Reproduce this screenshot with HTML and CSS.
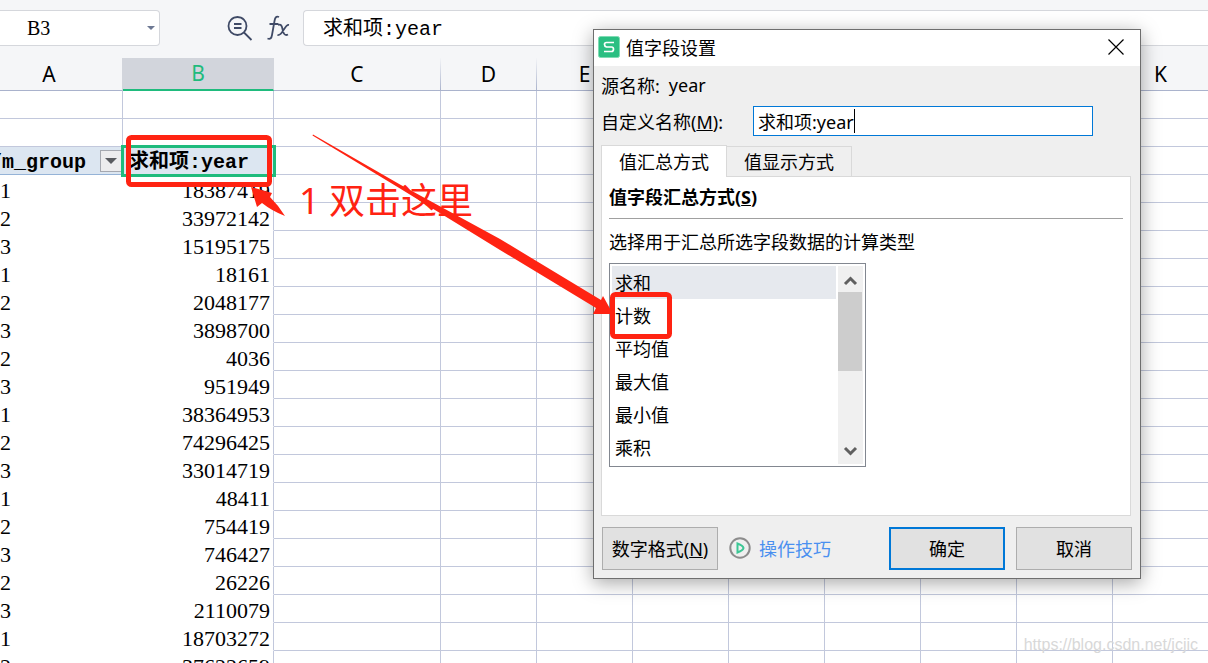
FILE: index.html
```
<!DOCTYPE html>
<html lang="zh-CN">
<head>
    <meta charset="UTF-8">
    <meta name="viewport" content="width=device-width, initial-scale=1.0">
    <title>值字段设置</title>
    <link rel="stylesheet" href="styles.css">
</head>
<body>
    <div class="toolbar">
        <div class="name-box">
            <input type="text" class="name-input" value="B3" aria-label="名称框">
            <button class="name-arrow" aria-label="展开"></button>
        </div>
        <div class="tools">
            <button class="tool" aria-label="查找">
                <svg width="26" height="26" viewBox="0 0 26 26" fill="none" stroke="#3f4a66" stroke-width="1.800">
                    <circle cx="10.500" cy="11" r="9"/>
                    <path d="M7 9h7.500M7 13h7.500M17 17.500L24.500 25"/>
                </svg>
            </button>
            <button class="tool" aria-label="插入函数">
                <svg width="24" height="26" viewBox="0 0 24 26" fill="none" stroke="#3f4a66" stroke-width="1.800">
                    <path d="M12 2C9 0.500 8 3 7.500 6L5 20C4.500 23 3.500 24.500 0.500 23.500M2.500 9h9M11 10c3-1.500 4 1 4.500 4s1.500 7.500 5.500 5.500M22 10c-4.500-1-6 11-11.500 10"/>
                </svg>
            </button>
        </div>
        <input type="text" class="formula" value="求和项:year" aria-label="编辑栏">
    </div>

    <table class="sheet">
        <colgroup>
            <col class="col-a"><col class="col-b"><col class="col-c">
            <col><col><col><col><col><col><col><col>
        </colgroup>
        <thead>
            <tr>
                <th class="head-a">A</th><th class="active">B</th><th>C</th><th>D</th><th>E</th><th>F</th><th>G</th><th>H</th><th>I</th><th>J</th><th>K</th>
            </tr>
        </thead>
        <tbody id="rows"></tbody>
    </table>

    <div class="dialog" role="dialog" aria-labelledby="title">
        <div class="titlebar">
            <svg class="logo" width="22" height="22" viewBox="0 0 22 22">
                <rect x="0.500" y="0.500" width="21" height="21" rx="2" fill="#2bbf82" stroke="#7fdcb4"/>
                <path d="M16 6.500H8.500Q6.500 6.500 6.500 8.500T8.500 11H13.500Q15.500 11 15.500 13.200T13.500 15.500H6" fill="none" stroke="#fff" stroke-width="1.700"/>
            </svg>
            <span id="title">值字段设置</span>
            <button class="close" aria-label="关闭">
                <svg width="16" height="16" viewBox="0 0 16 16" stroke="#000" stroke-width="1.200"><path d="M0.500 0.500l15 15M15.500 0.500l-15 15"/></svg>
            </button>
        </div>
        <div class="source"><span>源名称:</span><span>year</span></div>
        <div class="custom">
            <label for="custom">自定义名称(<u>M</u>):</label>
            <div class="text-field">
                <input type="text" id="custom" value="求和项:year">
                <span class="caret"></span>
            </div>
        </div>
        <div class="tabs" role="tablist">
            <button class="tab current" role="tab" aria-selected="true">值汇总方式</button>
            <button class="tab" role="tab" aria-selected="false">值显示方式</button>
        </div>
        <div class="panel" role="tabpanel">
            <h2>值字段汇总方式(<u>S</u>)</h2>
            <label class="hint" for="method">选择用于汇总所选字段数据的计算类型</label>
            <div class="listbox">
                <select id="method" size="6">
                    <option selected>求和</option>
                    <option>计数</option>
                    <option>平均值</option>
                    <option>最大值</option>
                    <option>最小值</option>
                    <option>乘积</option>
                </select>
                <div class="scrollbar">
                    <svg width="24" height="26" viewBox="0 0 24 26" fill="none" stroke="#606060" stroke-width="3"><path d="M7 18l5.500-5.500L18 18"/></svg>
                    <div class="thumb"></div>
                    <svg width="24" height="26" viewBox="0 0 24 26" fill="none" stroke="#606060" stroke-width="3"><path d="M7 10l5.500 5.500L18 10"/></svg>
                </div>
            </div>
        </div>
        <div class="footer">
            <button class="btn">数字格式(<u>N</u>)</button>
            <a class="tips" href="#">
                <svg width="22" height="22" viewBox="0 0 22 22" fill="none">
                    <circle cx="11" cy="11" r="9.700" stroke="#8c8c8c" stroke-width="2"/>
                    <path d="M8.500 6.500v9q5.500-2 6-4.500q-.5-2.500-6-4.500z" stroke="#3cc795" stroke-width="2"/>
                </svg>
                <span>操作技巧</span>
            </a>
            <button class="btn ok">确定</button>
            <button class="btn">取消</button>
        </div>
    </div>

    <svg class="marks" width="700" height="400" viewBox="0 0 700 400">
        <rect x="128.500" y="137.500" width="141" height="47" rx="3" fill="none" stroke="#ff2312" stroke-width="5"/>
        <rect x="612.500" y="294.500" width="57" height="42" rx="3" fill="none" stroke="#ff2312" stroke-width="5"/>
        <path d="M251 187l21 6-2 4q9 9 15 19q-13-5-23-13l-5 4z" fill="#ff2312"/>
        <path d="M313 134.500L400 184.500L500 239L601 300L603 296L613 314L593 314L596 308L500 250L400 188.500L312.500 135.500z" fill="#ff2312"/>
    </svg>
    <div class="note">1 双击这里</div>
    <div class="watermark">https://blog.csdn.net/jcjic</div>

    <script>
        const data = [
            [1, 18387419], [2, 33972142], [3, 15195175], [1, 18161], [2, 2048177], [3, 3898700],
            [2, 4036], [3, 951949], [1, 38364953], [2, 74296425], [3, 33014719], [1, 48411],
            [2, 754419], [3, 746427], [2, 26226], [3, 2110079], [1, 18703272], [2, 37622659]
        ];
        const rest = '<td></td>'.repeat(9);
        let html = `<tr><td></td><td></td>${rest}</tr>`.repeat(2);
        html += `<tr><td class="field"><div class="field-box"><span>/m_group</span><button class="filter" aria-label="筛选"></button></div></td>` +
            `<td class="field selected">求和项:year</td>${rest}</tr>`;
        html += data.map(r => `<tr><td class="group">${r[0]}</td><td class="value">${r[1]}</td>${rest}</tr>`).join('');
        document.getElementById('rows').innerHTML = html;
    </script>
</body>
</html>
```
FILE: styles.css
```
* {
    box-sizing: border-box;
}
body {
    margin: 0;
    height: 100vh;
    overflow: hidden;
    position: relative;
    background: #fff;
    color: #000;
    font-family: "Noto Sans", "Noto Sans CJK SC", sans-serif;
    font-size: 18px;
}
button, input, select {
    font: inherit;
    color: inherit;
    margin: 0;
    padding: 0;
    border: none;
    background: none;
    outline: none;
}

/* 编辑栏 */
.toolbar {
    display: flex;
    height: 58px;
    padding: 10px 0 12px;
    background: #f5f6f8;
}
.name-box {
    display: flex;
    width: 160px;
    border: 1px solid #d5d7dc;
    border-left: none;
    border-radius: 0 4px 4px 0;
    background: #fff;
}
.name-input {
    flex: 1;
    min-width: 0;
    padding-left: 27px;
    font-family: "Liberation Serif", serif;
    font-size: 20px;
}
.name-arrow {
    width: 16px;
}
.name-arrow::before, .filter::before {
    content: "";
    display: block;
    margin: 0 auto;
    width: 0;
    border: 4px solid transparent;
    border-top-color: #6d7893;
    border-bottom: none;
}
.tools {
    display: flex;
    gap: 14px;
    width: 143px;
    padding-left: 67px;
}
.tool {
    display: flex;
    align-items: center;
}
.formula {
    flex: 1;
    min-width: 0;
    padding: 0 0 4px 19px;
    border: 1px solid #d5d7dc;
    border-right: none;
    border-radius: 4px 0 0 4px;
    background: #fff;
    font-family: "Liberation Mono", "Noto Sans CJK SC", monospace;
    font-size: 20px;
}

/* 表格 */
.sheet {
    width: 1209px;
    min-width: 100%;
    table-layout: fixed;
    border-collapse: separate;
    border-spacing: 0;
}
.col-a { width: 123px; }
.col-b { width: 151px; }
.col-c { width: 167px; }
.sheet th {
    height: 33px;
    padding: 0;
    border-right: 1px solid;
    border-bottom: 1px solid #a9b2cc;
    border-image: linear-gradient(#f5f6f8, #a9b2cc) 1;
    background: #f5f6f8;
    font-size: 21px;
    font-weight: normal;
    line-height: 32px;
}
.sheet th.head-a {
    padding-right: 24px;
    border-image: none;
    border-right-color: #d2d5dc;
}
.sheet th.active {
    background: #d2d5dc;
    color: #1fbb7d;
    border-image: none;
    border-right-color: #d2d5dc;
    border-bottom: 2px solid #1fbb7d;
    line-height: 31px;
}
.sheet td {
    height: 28px;
    padding: 4px 0 0;
    border-right: 1px solid #c2c8dc;
    border-bottom: 1px solid #c2c8dc;
    font-family: "Liberation Serif", serif;
    font-size: 22px;
    line-height: 23px;
}
.sheet td.group, .sheet td.value {
    border-bottom-color: #fff;
}
.sheet td.group {
    border-right: none;
}
.sheet td.value {
    padding-right: 3px;
    text-align: right;
}
.sheet td.field {
    padding-top: 0;
    background: #dce6f1;
    border-bottom-color: #95b3d7;
    font-family: "Liberation Mono", "Noto Sans CJK SC", monospace;
    font-size: 20px;
    font-weight: bold;
    white-space: nowrap;
}
.sheet td.selected {
    padding: 4px 0 0 6px;
    outline: 3px solid #1fbb7d;
    outline-offset: -1px;
}
.field-box {
    display: flex;
    justify-content: flex-end;
    align-items: center;
    gap: 14px;
    height: 27px;
    overflow: hidden;
}
.field-box span {
    padding-top: 4px;
}
.filter {
    flex: none;
    width: 22px;
    height: 22px;
    border: 1px solid #a5a8b0;
    background: #ececee;
}
.filter::before {
    border-width: 6px;
    border-bottom: none;
    border-top-color: #595b60;
}

/* 对话框 */
.dialog {
    position: absolute;
    left: 593px;
    top: 29px;
    width: 548px;
    padding: 0 8px 8px 7px;
    border: 1px solid #6e6e6e;
    background: #efefef;
    box-shadow: 0 4px 18px rgba(0, 0, 0, 0.35);
}
.titlebar {
    display: flex;
    align-items: center;
    gap: 6px;
    height: 36px;
    margin: 0 -8px 0 -7px;
    padding: 0 16px 2px 4px;
    background: #fff;
}
.close {
    display: flex;
    margin-left: auto;
}
.source {
    display: flex;
    align-items: center;
    gap: 9px;
    height: 38px;
}
.custom {
    display: flex;
    align-items: center;
    height: 34px;
}
.custom label {
    width: 152px;
}
.text-field {
    display: flex;
    align-items: center;
    width: 340px;
    height: 30px;
    padding-left: 4px;
    border: 1px solid #0078d7;
    background: #fff;
}
.text-field input {
    width: 96px;
}
.caret {
    width: 1px;
    height: 24px;
    background: #000;
}
.tabs {
    display: flex;
    align-items: flex-end;
    margin-top: 7px;
}
.tab {
    width: 125px;
    height: 30px;
    padding-bottom: 2px;
    border: 1px solid #d9d9d9;
    border-bottom: none;
    border-left: none;
}
.tab.current {
    z-index: 1;
    width: 126px;
    height: 32px;
    margin-bottom: -1px;
    border-left: 1px solid #d9d9d9;
    background: #fff;
}
.panel {
    height: 340px;
    margin-right: 1px;
    padding: 0 7px;
    border: 1px solid #d9d9d9;
    background: #fff;
}
.panel h2 {
    height: 42px;
    margin: 0;
    border-bottom: 1px solid #a0a0a0;
    font-size: 18px;
    line-height: 40px;
}
.hint {
    display: block;
    height: 44px;
    line-height: 46px;
}
.listbox {
    display: flex;
    gap: 2px;
    width: 257px;
    height: 204px;
    padding: 2px;
    border: 1px solid #828790;
}
.listbox select {
    flex: 1;
    height: 198px;
    overflow: hidden;
    border-radius: 0;
}
.listbox option {
    height: 33px;
    min-height: 33px;
    padding: 3px 3px 0;
    line-height: 28px;
}
.listbox option:checked {
    background: #e6e9ee linear-gradient(#e6e9ee, #e6e9ee);
    color: #000;
}
.scrollbar {
    display: flex;
    flex-direction: column;
    width: 25px;
    background: #f0f0f0;
}
.thumb {
    height: 79px;
    margin: 0 1px 0 0;
    background: #cdcdcd;
}
.scrollbar svg:last-child {
    margin-top: auto;
}
.footer {
    display: flex;
    align-items: center;
    gap: 11px;
    margin-top: 11px;
    padding-left: 1px;
}
.btn {
    width: 116px;
    height: 43px;
    padding-bottom: 2px;
    border: 1px solid #adadad;
    background: #e1e1e1;
}
.btn.ok {
    border: 2px solid #0078d7;
}
.tips {
    display: flex;
    align-items: center;
    gap: 8px;
    margin-right: auto;
    padding-bottom: 2px;
    color: #4a90f0;
    text-decoration: none;
}

/* 标注 */
.marks {
    position: absolute;
    left: 0;
    top: 0;
    pointer-events: none;
}
.note {
    position: absolute;
    left: 299px;
    top: 174px;
    color: #ff2312;
    font-size: 36px;
    line-height: 54px;
}
.watermark {
    position: absolute;
    right: 10px;
    bottom: 9px;
    color: #d8d8d8;
    font-family: "Liberation Sans", sans-serif;
    font-size: 16px;
}
```
